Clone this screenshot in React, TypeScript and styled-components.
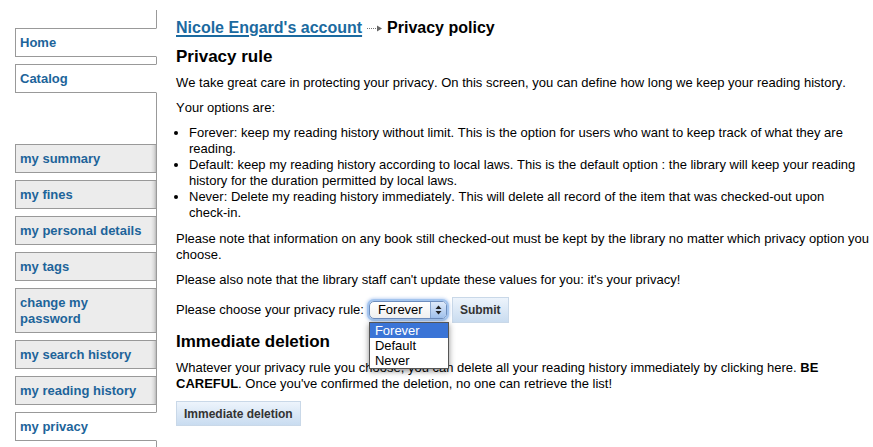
import React from 'react';
import styled, { createGlobalStyle } from 'styled-components';

const GlobalStyle = createGlobalStyle`
  html, body { margin: 0; padding: 0; background: #fff; }
  body {
    font-family: "Liberation Sans", Arial, Helvetica, sans-serif;
    color: #000;
    overflow: hidden;
    font-kerning: none;
  }
`;

const Page = styled.div`
  display: flex;
  align-items: flex-start;
  min-height: 447px;
`;

const Sidebar = styled.nav`
  flex: 0 0 142px;
  box-sizing: border-box;
  margin: 10px 0 0 15px;
  padding-top: 18px;
  min-height: 437px;
  border-right: 1px solid #999;
`;

const TabList = styled.ul<{ $gap: number }>`
  list-style: none;
  margin: 0 0 ${(p) => p.$gap}px;
  padding: 0;
`;

const Tab = styled.li<{ $active?: boolean }>`
  margin: 0 -1px 7px 0;
  border: 1px solid #999;
  border-right-color: ${(p) => (p.$active ? '#fff' : '#999')};
  background: ${(p) =>
    p.$active
      ? '#fff'
      : 'linear-gradient(to left, #b9b9b9 0, #dadada 2px, #ececec 5px)'};
  padding: 6px 9px 5px 4px;
  font-size: 13px;
  font-weight: bold;
  line-height: 16px;
`;

const TabLink = styled.a`
  color: #1d649a;
  text-decoration: none;
`;

const Main = styled.main`
  flex: 1;
  min-width: 0;
  padding: 18px 0 0 19px;
  font-size: 13px;
  line-height: 16px;
`;

const Breadcrumb = styled.div`
  font-size: 16px;
  font-weight: bold;
  line-height: 19px;
  margin: 0 0 10px;
`;

const CrumbLink = styled.a`
  color: #1b6aa0;
  text-decoration: underline;
  text-decoration-thickness: 2px;
  text-underline-offset: 2px;
`;

const CrumbArrow = styled.svg`
  vertical-align: middle;
  margin: 0 5px;
`;

const Heading = styled.h2`
  font-size: 17px;
  line-height: 20px;
  font-weight: bold;
  margin: 0 0 8px;
`;

const Para = styled.p`
  margin: 0 0 9px;
`;

const Options = styled.ul`
  margin: 0 0 10px;
  padding-left: 13px;
`;

const NoWrap = styled.span`
  white-space: nowrap;
`;

const FormRow = styled.form<{ $mt?: number }>`
  display: flex;
  align-items: center;
  margin: ${(p) => p.$mt ?? 0}px 0 9px;
`;

const SelectWrap = styled.div`
  position: relative;
  margin-left: 5px;
`;

const SelectBox = styled.div`
  box-sizing: border-box;
  width: 78px;
  height: 18px;
  display: flex;
  align-items: center;
  padding-left: 8px;
  border: 1px solid #6d8dbd;
  border-radius: 5px;
  background: linear-gradient(#ffffff, #f0f0f0);
  box-shadow: 0 0 0 2px #a3c4ee, 0 0 3px 3px rgba(120, 165, 230, 0.45);
  font-size: 13px;
  line-height: 16px;
`;

const SelectArrow = styled.span`
  margin-left: auto;
  align-self: stretch;
  width: 15px;
  display: flex;
  align-items: center;
  justify-content: center;
  border-left: 1px solid #88a6d0;
  border-radius: 0 4px 4px 0;
  background: linear-gradient(#dfeafa, #9fc0ec);
`;

const Dropdown = styled.ul`
  position: absolute;
  left: 0;
  top: 21px;
  width: 80px;
  box-sizing: border-box;
  margin: 0;
  padding: 0;
  list-style: none;
  background: #fff;
  border: 1px solid #555;
  box-shadow: 0 2px 6px rgba(0, 0, 0, 0.45);
  z-index: 2;
`;

const DropOption = styled.li<{ $active?: boolean }>`
  font-size: 13px;
  line-height: 15px;
  padding-left: 5px;
  color: ${(p) => (p.$active ? '#fff' : '#000')};
  background: ${(p) => (p.$active ? '#3a74d6' : 'transparent')};
`;

const Button = styled.button<{ $h: number; $ml?: number }>`
  font-family: inherit;
  font-size: 12px;
  font-weight: bold;
  color: #333;
  height: ${(p) => p.$h}px;
  padding: 0 7px;
  margin: 0 0 0 ${(p) => p.$ml ?? 0}px;
  border: 1px solid #c9d8e8;
  border-radius: 0;
  background: linear-gradient(#edf4fc, #c9dcf0);
`;

const topTabs = ['Home', 'Catalog'];
const userTabs = [
  'my summary',
  'my fines',
  'my personal details',
  'my tags',
  'change my password',
  'my search history',
  'my reading history',
  'my privacy',
];

export default function App() {
  return (
    <>
      <GlobalStyle />
      <Page>
        <Sidebar>
          <TabList $gap={51}>
            {topTabs.map((t) => (
              <Tab key={t} $active>
                <TabLink href="#">{t}</TabLink>
              </Tab>
            ))}
          </TabList>
          <TabList $gap={0}>
            {userTabs.map((t) => (
              <Tab key={t} $active={t === 'my privacy'}>
                <TabLink href="#">{t}</TabLink>
              </Tab>
            ))}
          </TabList>
        </Sidebar>
        <Main>
          <Breadcrumb>
            <CrumbLink href="#">Nicole Engard's account</CrumbLink>
            <CrumbArrow width="15" height="7" viewBox="0 0 15 7">
              <line x1="0" y1="3.5" x2="11" y2="3.5" stroke="#777" strokeWidth="1" strokeDasharray="1 1" />
              <polygon points="10,0.5 15,3.5 10,6.5" fill="#666" />
            </CrumbArrow>
            Privacy policy
          </Breadcrumb>
          <Heading>Privacy rule</Heading>
          <Para>
            We take great care in protecting your privacy. On this screen, you can define how long we keep your reading history.
          </Para>
          <Para>Your options are:</Para>
          <Options>
            <li>Forever: keep my reading history without limit. This is the option for users who want to keep track of what they are reading.</li>
            <li>Default: keep my reading history according to local laws. This is the default option : the library will keep your reading history for the duration permitted by local laws.</li>
            <li>Never: Delete my reading history immediately. This will delete all record of the item that was checked-out upon <NoWrap>check-in.</NoWrap></li>
          </Options>
          <Para>
            Please note that information on any book still checked-out must be kept by the library no matter which privacy option you choose.
          </Para>
          <Para>Please also note that the library staff can't update these values for you: it's your privacy!</Para>
          <FormRow onSubmit={(e) => e.preventDefault()}>
            <span>Please choose your privacy rule:</span>
            <SelectWrap>
              <SelectBox>
                Forever
                <SelectArrow>
                  <svg width="7" height="10" viewBox="0 0 7 10">
                    <polygon points="3.5,0.5 6.5,4 0.5,4" fill="#222" />
                    <polygon points="0.5,6 6.5,6 3.5,9.5" fill="#222" />
                  </svg>
                </SelectArrow>
              </SelectBox>
              <Dropdown>
                <DropOption $active>Forever</DropOption>
                <DropOption>Default</DropOption>
                <DropOption>Never</DropOption>
              </Dropdown>
            </SelectWrap>
            <Button type="submit" $h={26} $ml={5}>Submit</Button>
          </FormRow>
          <Heading>Immediate deletion</Heading>
          <Para>
            Whatever your privacy rule you choose, you can delete all your reading history immediately by clicking here. <b>BE CAREFUL</b>. Once you've confirmed the deletion, no one can retrieve the list!
          </Para>
          <FormRow $mt={3} onSubmit={(e) => e.preventDefault()}>
            <Button type="submit" $h={25}>Immediate deletion</Button>
          </FormRow>
        </Main>
      </Page>
    </>
  );
}
